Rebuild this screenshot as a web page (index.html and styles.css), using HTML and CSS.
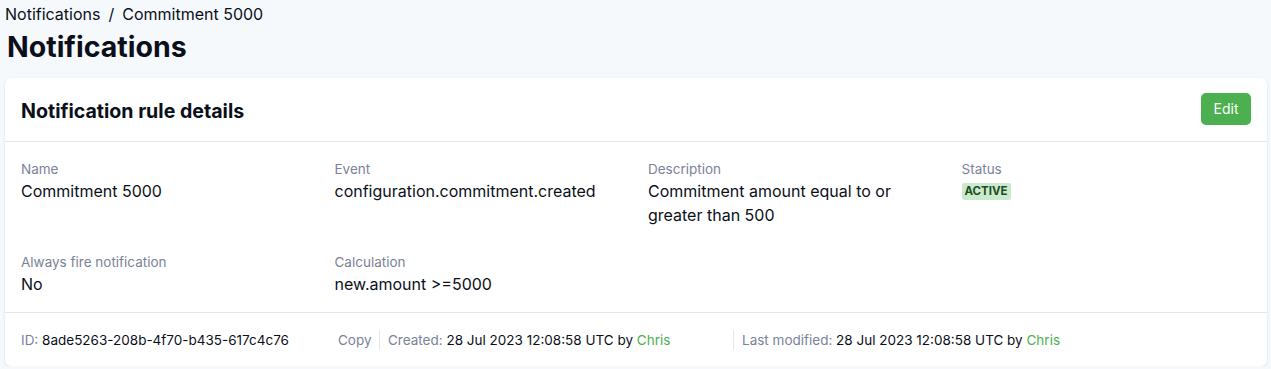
FILE: index.html
```html
<!DOCTYPE html>
<html lang="en">

<head>
    <meta charset="UTF-8" />
    <meta name="viewport" content="width=device-width, initial-scale=1.0" />
    <title>Notifications</title>
    <link rel="stylesheet" href="styles.css">
</head>

<body>

    <div class="breadcrumb">
        <span>Notifications</span>
        <span class="sep">/</span>
        <span>Commitment 5000</span>
    </div>

    <h1>Notifications</h1>

    <section class="card">
        <div class="card-header">
            <h2>Notification rule details</h2>
            <button type="button" class="edit-btn">Edit</button>
        </div>

        <div class="card-body">
            <div class="field">
                <div class="field-label">Name</div>
                <div class="field-value">Commitment 5000</div>
            </div>
            <div class="field">
                <div class="field-label">Event</div>
                <div class="field-value">configuration.commitment.created</div>
            </div>
            <div class="field">
                <div class="field-label">Description</div>
                <div class="field-value">Commitment amount equal to or greater than 500</div>
            </div>
            <div class="field">
                <div class="field-label">Status</div>
                <div class="field-value"><span class="badge">ACTIVE</span></div>
            </div>
            <div class="field">
                <div class="field-label">Always fire notification</div>
                <div class="field-value">No</div>
            </div>
            <div class="field">
                <div class="field-label">Calculation</div>
                <div class="field-value">new.amount &gt;=5000</div>
            </div>
        </div>

        <div class="card-footer">
            <div class="meta meta-id">
                <span class="muted">ID:</span> 8ade5263-208b-4f70-b435-617c4c76
            </div>
            <div class="meta meta-copy">
                <span class="muted">Copy</span>
            </div>
            <div class="meta meta-created">
                <span class="muted">Created:</span> 28 Jul 2023 12:08:58 UTC by <span class="user">Chris</span>
            </div>
            <div class="meta">
                <span class="muted">Last modified:</span> 28 Jul 2023 12:08:58 UTC by <span class="user">Chris</span>
            </div>
        </div>
    </section>

</body>

</html>
```

FILE: styles.css
```css
* {
    box-sizing: border-box;
}

body {
    font-family: Inter, "Noto Sans", sans-serif;
    margin: 0;
    padding: 4px 4px 0 5px;
    background-color: #f6f9fc;
    color: #0b0f1a;
}

.breadcrumb {
    font-size: 16px;
    line-height: 20px;
    display: flex;
    gap: 8px;
}

h1 {
    font-size: 28.5px;
    font-weight: 700;
    line-height: 34px;
    margin: 6px 0 14px 2px;
}

.card {
    background-color: #fff;
    border-radius: 6px;
    box-shadow: 0 1px 3px rgba(20, 40, 80, 0.12);
}

.card-header {
    display: flex;
    align-items: center;
    justify-content: space-between;
    height: 64px;
    padding: 0 16px;
    border-bottom: 1px solid #e3e6ee;
}

.card-header h2 {
    font-size: 19.6px;
    font-weight: 700;
    margin: 3px 0 0 0;
}

.edit-btn {
    width: 50px;
    height: 32px;
    margin-top: -2px;
    font-family: inherit;
    font-size: 14px;
    color: #fff;
    background-color: #4cb050;
    border: none;
    border-radius: 5px;
    cursor: pointer;
}

.edit-btn:hover {
    background-color: #3d9a41;
}

.card-body {
    display: grid;
    grid-template-columns: repeat(4, 1fr);
    column-gap: 24px;
    row-gap: 25px;
    padding: 17px 16px 16px;
    border-bottom: 1px solid #e3e6ee;
}

.field-label {
    font-size: 13.5px;
    line-height: 20px;
    color: #7b8299;
}

.field-value {
    font-size: 16px;
    line-height: 24px;
}

.badge {
    display: inline-block;
    font-size: 11.5px;
    font-weight: 700;
    line-height: 17px;
    padding: 0 3px;
    margin-top: 4px;
    vertical-align: top;
    color: #1d4d21;
    background-color: #cbe9cc;
    border-radius: 2px;
}

.card-footer {
    display: flex;
    align-items: center;
    height: 53px;
    padding: 0 16px;
    font-size: 13.5px;
}

.meta {
    line-height: 20px;
    white-space: nowrap;
}

.meta-id {
    width: 317px;
}

.meta-copy {
    width: 42px;
    border-right: 1px solid #e3e6ee;
}

.meta-created {
    width: 354px;
    padding-left: 8px;
    margin-right: 8px;
    border-right: 1px solid #e3e6ee;
}

.muted {
    color: #7b8299;
}

.user {
    color: #4cb050;
}
```
